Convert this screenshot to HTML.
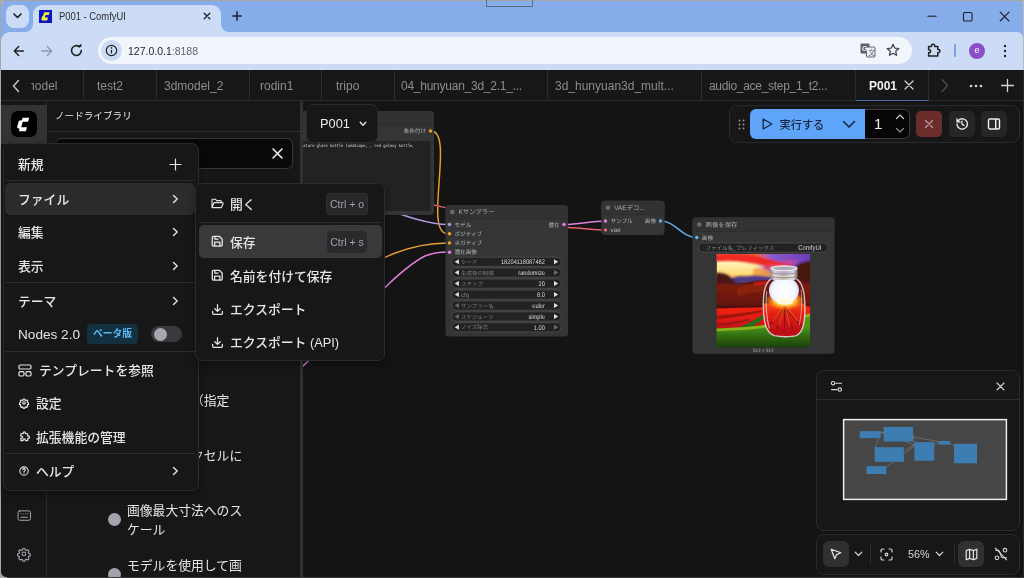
<!DOCTYPE html>
<html lang="ja">
<head>
<meta charset="utf-8">
<title>P001 - ComfyUI</title>
<style>
*{box-sizing:border-box;margin:0;padding:0}
html,body{width:1024px;height:578px;overflow:hidden;background:#141415}
body{position:relative;font-family:"Liberation Sans","Noto Sans CJK JP",sans-serif;color:#e4e4e6;font-size:13px;line-height:1}
.abs{position:absolute}
svg{position:absolute;overflow:visible}
/* ---------- browser chrome ---------- */
#titlebar{left:0;top:0;width:1024px;height:34px;background:#86acea}
#btab{left:33px;top:5px;width:188px;height:29px;background:#cddcf6;border-radius:9px 9px 0 0}
#toolbar{left:0;top:32px;width:1024px;height:38px;background:#cddcf6}
#omni{left:98px;top:37px;width:814px;height:27px;border-radius:14px;background:#f1f5fc}
.ctext{color:#1f2023;font-size:12px;white-space:nowrap}
/* ---------- app ---------- */
#app{left:0;top:70px;width:1024px;height:508px;background:#141415}
#tabs{left:1px;top:70px;width:1023px;height:31px;background:#171718;border-bottom:1px solid #2c2c2e}
.wtab{top:70px;height:30px;border-right:1px solid #2c2c2e;color:#8d8d92;font-size:12px;line-height:32px;white-space:nowrap;overflow:hidden}
#side{left:1px;top:101px;width:46px;height:477px;background:#171718;border-right:1px solid #2a2a2c}
#lib{left:47px;top:101px;width:253px;height:477px;background:#171718}
#split{left:300px;top:101px;width:3px;height:477px;background:#313134}
.menu{background:#171718;border:1px solid #2b2b2e;border-radius:7px;box-shadow:0 4px 10px rgba(0,0,0,.35)}
.mi{left:18px;margin-top:1px;font-weight:500;font-size:12.8px;color:#e6e6e8;white-space:nowrap;line-height:20px;height:20px}
.sep{height:1px;background:#2c2c2f}
.hl{background:#2c2c2e;border-radius:5px}
.kbd{background:#27272a;border:1px solid #323235;border-radius:4px;color:#a0a0a6;font-size:10.5px;line-height:20px;height:22px;text-align:center}
.libt{font-size:12.8px;line-height:22px;color:#e6e6e8;white-space:nowrap}
.dot{width:13px;height:13px;border-radius:50%;background:#a4a3ab}
</style>
</head>
<body>
<div id="root" style="position:absolute;left:0;top:0;width:1024px;height:578px;will-change:transform">
<!-- browser chrome -->
<div class="abs" style="left:0;top:0;width:1024px;height:70px;background:#b9babd"></div>
<div id="titlebar" class="abs" style="left:1px;border-radius:7px 5px 0 0;width:1022px;height:70px"></div>
<div id="toolbar" class="abs" style="left:1px;width:1021.500px;border-radius:9px 6px 0 0"></div>
<div class="abs" style="left:6px;top:5px;width:23px;height:23px;border-radius:8px;background:#cddcf6"></div>
<svg style="left:12px;top:12px" width="11" height="8" viewBox="0 0 11 8"><path d="M2 2 L5.5 5.5 L9 2" fill="none" stroke="#1f2023" stroke-width="1.7" stroke-linecap="round" stroke-linejoin="round"/></svg>
<div id="btab" class="abs"></div>
<svg style="left:25px;top:24px" width="8" height="8" viewBox="0 0 8 8"><path d="M8 0 V8 H0 A8 8 0 0 0 8 0Z" fill="#cddcf6"/></svg>
<svg style="left:221px;top:24px" width="8" height="8" viewBox="0 0 8 8"><path d="M0 0 V8 H8 A8 8 0 0 1 0 0Z" fill="#cddcf6"/></svg>
<div class="abs" style="left:39px;top:10px;width:13px;height:13px;background:#0b14c9"></div>
<svg style="left:39px;top:10px" width="13" height="13" viewBox="0 0 13 13"><path d="M5.2 2.2 H10.6 L9.8 5 H6.6 L5.9 7.6 H9 L8.2 10.6 H3.3 L2.3 9.4 L3.1 6.4 L4.1 5.6 Z" fill="#f1ee2b"/></svg>
<div class="abs ctext" style="left:59px;top:10px;font-size:10px;line-height:14px;color:#2b2d31;transform:scaleX(.94);transform-origin:0 0">P001 - ComfyUI</div>
<svg style="left:203px;top:12px" width="8" height="8" viewBox="0 0 8 8"><path d="M1.2 1.2 L6.800 6.800 M6.800 1.200 L1.200 6.800" stroke="#1f2023" stroke-width="1.300" stroke-linecap="round"/></svg>
<svg style="left:231.500px;top:11px" width="10" height="10" viewBox="0 0 10 10"><path d="M5 0.800 V9.200 M0.800 5 H9.200" stroke="#1f2023" stroke-width="1.500" stroke-linecap="round"/></svg>
<div class="abs" style="left:0;top:0;width:1024px;height:1px;background:#a3a5a8"></div>
<div class="abs" style="left:486px;top:0;width:47px;height:7px;border:1px solid #5d6c86;border-top:0"></div>
<!-- window controls -->
<svg style="left:926px;top:10px" width="12" height="12" viewBox="0 0 12 12"><path d="M1.5 6.2 H10.5" stroke="#1f2023" stroke-width="1.1"/></svg>
<svg style="left:962px;top:11px" width="12" height="12" viewBox="0 0 12 12"><rect x="1.5" y="1.5" width="8.5" height="8.5" rx="1.3" fill="none" stroke="#1f2023" stroke-width="1.1"/></svg>
<svg style="left:999px;top:11px" width="12" height="12" viewBox="0 0 12 12"><path d="M1.2 1.2 L10 10 M10 1.2 L1.2 10" stroke="#1f2023" stroke-width="1.1" stroke-linecap="round"/></svg>
<!-- toolbar icons -->
<svg style="left:12px;top:44px" width="14" height="14" viewBox="0 0 14 14"><path d="M11.3 7 H2.5 M6.6 2.600 L2.300 7 L6.600 11.400" fill="none" stroke="#1f2023" stroke-width="1.500" stroke-linecap="round" stroke-linejoin="round"/></svg>
<svg style="left:40px;top:44px" width="14" height="14" viewBox="0 0 14 14"><path d="M2 7 H11.5 M7.2 2.4 L11.7 7 L7.2 11.6" fill="none" stroke="#8a94a6" stroke-width="1.3" stroke-linecap="round" stroke-linejoin="round"/></svg>
<svg style="left:69px;top:43px" width="15" height="15" viewBox="0 0 15 15"><path d="M12.3 7.6 A4.9 4.9 0 1 1 10.6 3.8" fill="none" stroke="#1f2023" stroke-width="1.6" stroke-linecap="round"/><path d="M8.6 3.9 H12.4 V0.6 Z" fill="#1f2023"/></svg>
<div id="omni" class="abs"></div>
<div class="abs" style="left:101px;top:40px;width:21px;height:21px;border-radius:50%;background:#cddcf6"></div>
<svg style="left:105px;top:44px" width="13" height="13" viewBox="0 0 13 13"><circle cx="6.5" cy="6.5" r="5.2" fill="none" stroke="#1f2023" stroke-width="1.2"/><path d="M6.5 5.8 V9.4" stroke="#1f2023" stroke-width="1.3"/><circle cx="6.5" cy="3.9" r="0.8" fill="#1f2023"/></svg>
<div class="abs ctext" style="left:128px;top:43.500px;line-height:15px;font-size:11.200px;transform:scaleX(.937);transform-origin:0 0"><span style="color:#1f2023">127.0.0.1</span><span style="color:#5f6368">:8188</span></div>
<!-- toolbar right -->
<svg style="left:860px;top:43px" width="16" height="15" viewBox="0 0 16 15"><rect x="0.5" y="0.5" width="9" height="10" rx="1" fill="#5f6368"/><rect x="6.5" y="4" width="8.5" height="10" rx="1" fill="#eef3fb" stroke="#5f6368" stroke-width="1"/><text x="2" y="8" font-size="7" font-weight="bold" fill="#eef3fb" font-family="Liberation Sans, sans-serif">G</text><text x="8.3" y="12.3" font-size="7" fill="#5f6368" font-family="Noto Sans CJK JP, sans-serif">文</text></svg>
<svg style="left:886px;top:43px" width="14" height="14" viewBox="0 0 14 14"><path d="M7 1.3 L8.7 5.1 L12.8 5.5 L9.7 8.2 L10.6 12.3 L7 10.2 L3.4 12.3 L4.3 8.2 L1.2 5.5 L5.3 5.1 Z" fill="none" stroke="#3c4043" stroke-width="1.2" stroke-linejoin="round"/></svg>
<svg style="left:926px;top:42px" width="16" height="16" viewBox="0 0 16 16"><path d="M2.600 4.600 H5.400 V3.900 A1.700 1.700 0 0 1 8.800 3.900 V4.600 H11.800 V7.500 H12.300 A1.600 1.600 0 0 1 12.300 10.700 H11.800 V14 H2.600 V10.700 H3.100 A1.500 1.500 0 0 0 3.100 7.700 H2.600 Z" fill="none" stroke="#1f2023" stroke-width="1.500" stroke-linejoin="round"/></svg>
<div class="abs" style="left:954px;top:44px;width:2px;height:13px;background:#7ba4e6;border-radius:1px"></div>
<div class="abs" style="left:969px;top:43px;width:16px;height:16px;border-radius:50%;background:#8a4fc7;color:#fff;font-size:9px;line-height:15px;text-align:center">e</div>
<svg style="left:1003px;top:44px" width="4" height="14" viewBox="0 0 4 14"><circle cx="2" cy="2" r="1.2" fill="#1f2023"/><circle cx="2" cy="7" r="1.2" fill="#1f2023"/><circle cx="2" cy="12" r="1.2" fill="#1f2023"/></svg>
<!-- app -->
<div id="app" class="abs"></div>
<!-- CANVAS START -->
<svg id="cv" style="left:0;top:0;text-rendering:geometricPrecision" width="1024" height="578" viewBox="0 0 1024 578" font-family="Liberation Sans, Noto Sans CJK JP, sans-serif">
<defs><clipPath id="cvclip"><rect x="303" y="101" width="721" height="477"/></clipPath></defs>
<g clip-path="url(#cvclip)">
<path d="M431 131 C455 131 423 233.75 447.5 233.75" fill="none" stroke="#1a1a1a" stroke-width="2.45" stroke-opacity=".4"/>
<path d="M431 131 C455 131 423 233.75 447.5 233.75" fill="none" stroke="#e9a033" stroke-width="1.45" stroke-linecap="round"/>
<path d="M250 310 C330 310 367 243 448 243" fill="none" stroke="#1a1a1a" stroke-width="2.45" stroke-opacity=".4"/>
<path d="M250 310 C330 310 367 243 448 243" fill="none" stroke="#e9a033" stroke-width="1.45" stroke-linecap="round"/>
<path d="M285 383 C320 350 360 312 385 287.5 C400 273 413 262 425 256 C434 252.5 440 252 448 252" fill="none" stroke="#1a1a1a" stroke-width="2.45" stroke-opacity=".4"/>
<path d="M285 383 C320 350 360 312 385 287.5 C400 273 413 262 425 256 C434 252.5 440 252 448 252" fill="none" stroke="#e27fdc" stroke-width="1.45" stroke-linecap="round"/>
<path d="M380 207 C395 212 425 224.5 448 224.5" fill="none" stroke="#1a1a1a" stroke-width="2.45" stroke-opacity=".4"/>
<path d="M380 207 C395 212 425 224.5 448 224.5" fill="none" stroke="#b19adb" stroke-width="1.45" stroke-linecap="round"/>
<path d="M405 199 C450 208 520 226 568 227.5 C585 228.3 595 230 605.5 230" fill="none" stroke="#1a1a1a" stroke-width="2.45" stroke-opacity=".4"/>
<path d="M405 199 C450 208 520 226 568 227.5 C585 228.3 595 230 605.5 230" fill="none" stroke="#e6626a" stroke-width="1.45" stroke-linecap="round"/>
<path d="M564 224.5 C580 224.5 590 221 605.5 221" fill="none" stroke="#1a1a1a" stroke-width="2.45" stroke-opacity=".4"/>
<path d="M564 224.5 C580 224.5 590 221 605.5 221" fill="none" stroke="#e27fdc" stroke-width="1.45" stroke-linecap="round"/>
<path d="M660.5 221 C676 221 681 237.5 697 237.5" fill="none" stroke="#1a1a1a" stroke-width="2.45" stroke-opacity=".4"/>
<path d="M660.5 221 C676 221 681 237.5 697 237.5" fill="none" stroke="#5fb0ee" stroke-width="1.45" stroke-linecap="round"/>
<rect x="290" y="111" width="144" height="104" rx="3.5" fill="#353535"/>
<path d="M290 125 V114.5 a3.5 3.5 0 0 1 3.5 -3.5 H430.5 a3.5 3.5 0 0 1 3.5 3.5 V125 Z" fill="#323232"/>
<rect x="290" y="124.6" width="144" height="0.8" fill="#2a2a2a" opacity=".7"/>
<circle cx="296.7" cy="118.0" r="2.3" fill="#6a6a6a"/>
<circle cx="430.5" cy="131" r="1.75" fill="#e9a033"/>
<text transform="translate(426.0 133) scale(.25 0.25)" font-size="22.4" fill="#b4b4b4" text-anchor="end">条件付け</text>
<rect x="296" y="141" width="134.5" height="70" rx="1.5" fill="#222222"/>
<text x="303.3" y="147.2" font-size="4.4" fill="#dcdcdc" text-anchor="start" font-family="Liberation Mono, monospace" textLength="111" lengthAdjust="spacingAndGlyphs">ature glass bottle landscape, , red galaxy bottle,</text>
<rect x="445.5" y="205" width="122.5" height="131.5" rx="3.5" fill="#353535"/>
<path d="M445.5 219 V208.5 a3.5 3.5 0 0 1 3.5 -3.5 H564.5 a3.5 3.5 0 0 1 3.5 3.5 V219 Z" fill="#323232"/>
<rect x="445.5" y="218.6" width="122.5" height="0.8" fill="#2a2a2a" opacity=".7"/>
<circle cx="452.2" cy="212.0" r="2.3" fill="#6a6a6a"/>
<text transform="translate(458.5 214.3) scale(.25 0.25)" font-size="25.6" fill="#a8a8a8" text-anchor="start">Kサンプラー</text>
<circle cx="449.5" cy="224.5" r="1.75" fill="#b19adb"/>
<text transform="translate(454.5 226.5) scale(.25 0.25)" font-size="22.4" fill="#b4b4b4" text-anchor="start">モデル</text>
<circle cx="449.5" cy="233.75" r="1.75" fill="#e9a033"/>
<text transform="translate(454.5 235.75) scale(.25 0.25)" font-size="22.4" fill="#b4b4b4" text-anchor="start">ポジティブ</text>
<circle cx="449.5" cy="243" r="1.75" fill="#e9a033"/>
<text transform="translate(454.5 245) scale(.25 0.25)" font-size="22.4" fill="#b4b4b4" text-anchor="start">ネガティブ</text>
<circle cx="449.5" cy="252.2" r="1.75" fill="#e27fdc"/>
<text transform="translate(454.5 254.2) scale(.25 0.25)" font-size="22.4" fill="#b4b4b4" text-anchor="start">潜在画像</text>
<circle cx="564" cy="224.5" r="1.75" fill="#e27fdc"/>
<text transform="translate(559.5 226.5) scale(.25 0.25)" font-size="22.4" fill="#b4b4b4" text-anchor="end">潜在</text>
<rect x="451.7" y="257.2" width="109.5" height="9.2" rx="4.6" fill="#222222" stroke="#565656" stroke-width="0.7"/>
<path d="M454.7 261.8 l4.2 -2.5 v5 Z" fill="#e0e0e0"/>
<path d="M558.2 261.8 l-4.2 -2.5 v5 Z" fill="#e0e0e0"/>
<text transform="translate(461.0 263.8) scale(.25 0.25)" font-size="22" fill="#7e7e7e" text-anchor="start">シード</text>
<text transform="translate(544.9000000000001 264.0) scale(.25 0.295)" font-size="22.8" fill="#dcdcdc" text-anchor="end">18204118087482</text>
<rect x="451.7" y="268.0" width="109.5" height="9.2" rx="4.6" fill="#222222" stroke="#565656" stroke-width="0.7"/>
<path d="M454.7 272.6 l4.2 -2.5 v5 Z" fill="#e0e0e0"/>
<path d="M558.2 272.6 l-4.2 -2.5 v5 Z" fill="#6a6a6a"/>
<text transform="translate(461.0 274.6) scale(.25 0.25)" font-size="22" fill="#7e7e7e" text-anchor="start">生成後の制御</text>
<text transform="translate(544.9000000000001 274.8) scale(.25 0.295)" font-size="22.8" fill="#dcdcdc" text-anchor="end">randomize</text>
<rect x="451.7" y="279.0" width="109.5" height="9.2" rx="4.6" fill="#222222" stroke="#565656" stroke-width="0.7"/>
<path d="M454.7 283.6 l4.2 -2.5 v5 Z" fill="#e0e0e0"/>
<path d="M558.2 283.6 l-4.2 -2.5 v5 Z" fill="#e0e0e0"/>
<text transform="translate(461.0 285.6) scale(.25 0.25)" font-size="22" fill="#7e7e7e" text-anchor="start">ステップ</text>
<text transform="translate(544.9000000000001 285.8) scale(.25 0.295)" font-size="22.8" fill="#dcdcdc" text-anchor="end">20</text>
<rect x="451.7" y="290.0" width="109.5" height="9.2" rx="4.6" fill="#222222" stroke="#565656" stroke-width="0.7"/>
<path d="M454.7 294.6 l4.2 -2.5 v5 Z" fill="#e0e0e0"/>
<path d="M558.2 294.6 l-4.2 -2.5 v5 Z" fill="#e0e0e0"/>
<text transform="translate(461.0 296.6) scale(.25 0.25)" font-size="22" fill="#7e7e7e" text-anchor="start"><tspan font-size="24.8">cfg</tspan></text>
<text transform="translate(544.9000000000001 296.8) scale(.25 0.295)" font-size="22.8" fill="#dcdcdc" text-anchor="end">8.0</text>
<rect x="451.7" y="301.0" width="109.5" height="9.2" rx="4.6" fill="#222222" stroke="#565656" stroke-width="0.7"/>
<path d="M454.7 305.6 l4.2 -2.5 v5 Z" fill="#6a6a6a"/>
<path d="M558.2 305.6 l-4.2 -2.5 v5 Z" fill="#e0e0e0"/>
<text transform="translate(461.0 307.6) scale(.25 0.25)" font-size="22" fill="#7e7e7e" text-anchor="start">サンプラー名</text>
<text transform="translate(544.9000000000001 307.8) scale(.25 0.295)" font-size="22.8" fill="#dcdcdc" text-anchor="end">euler</text>
<rect x="451.7" y="311.9" width="109.5" height="9.2" rx="4.6" fill="#222222" stroke="#565656" stroke-width="0.7"/>
<path d="M454.7 316.5 l4.2 -2.5 v5 Z" fill="#6a6a6a"/>
<path d="M558.2 316.5 l-4.2 -2.5 v5 Z" fill="#e0e0e0"/>
<text transform="translate(461.0 318.5) scale(.25 0.25)" font-size="22" fill="#7e7e7e" text-anchor="start">スケジューラ</text>
<text transform="translate(544.9000000000001 318.7) scale(.25 0.295)" font-size="22.8" fill="#dcdcdc" text-anchor="end">simple</text>
<rect x="451.7" y="322.7" width="109.5" height="9.2" rx="4.6" fill="#222222" stroke="#565656" stroke-width="0.7"/>
<path d="M454.7 327.3 l4.2 -2.5 v5 Z" fill="#e0e0e0"/>
<path d="M558.2 327.3 l-4.2 -2.5 v5 Z" fill="#6a6a6a"/>
<text transform="translate(461.0 329.3) scale(.25 0.25)" font-size="22" fill="#7e7e7e" text-anchor="start">ノイズ除去</text>
<text transform="translate(544.9000000000001 329.5) scale(.25 0.295)" font-size="22.8" fill="#dcdcdc" text-anchor="end">1.00</text>
<rect x="601.3" y="200.8" width="63.2" height="34.2" rx="3.5" fill="#353535"/>
<path d="M601.3 214.60000000000002 V204.3 a3.5 3.5 0 0 1 3.5 -3.5 H661.0 a3.5 3.5 0 0 1 3.5 3.5 V214.60000000000002 Z" fill="#323232"/>
<rect x="601.3" y="214.20000000000002" width="63.2" height="0.8" fill="#2a2a2a" opacity=".7"/>
<circle cx="608.0" cy="207.70000000000002" r="2.3" fill="#6a6a6a"/>
<text transform="translate(614.3 210.00000000000003) scale(.25 0.25)" font-size="25.6" fill="#a8a8a8" text-anchor="start">VAEデコ...</text>
<circle cx="605.5" cy="221" r="1.75" fill="#e27fdc"/>
<text transform="translate(610.5 223) scale(.25 0.25)" font-size="22.4" fill="#b4b4b4" text-anchor="start">サンプル</text>
<circle cx="605.5" cy="230" r="1.75" fill="#e6626a"/>
<text transform="translate(610.5 232) scale(.25 0.25)" font-size="22.4" fill="#b4b4b4" text-anchor="start"><tspan font-size="25.2">vae</tspan></text>
<circle cx="660.5" cy="221" r="1.75" fill="#5fb0ee"/>
<text transform="translate(656.0 223) scale(.25 0.25)" font-size="22.4" fill="#b4b4b4" text-anchor="end">画像</text>
<rect x="692.5" y="217.5" width="142" height="136.3" rx="3.5" fill="#353535"/>
<path d="M692.5 231.5 V221.0 a3.5 3.5 0 0 1 3.5 -3.5 H831.0 a3.5 3.5 0 0 1 3.5 3.5 V231.5 Z" fill="#323232"/>
<rect x="692.5" y="231.1" width="142" height="0.8" fill="#2a2a2a" opacity=".7"/>
<circle cx="699.2" cy="224.5" r="2.3" fill="#6a6a6a"/>
<text transform="translate(705.5 226.8) scale(.25 0.25)" font-size="25.6" fill="#a8a8a8" text-anchor="start">画像を保存</text>
<circle cx="696.8" cy="237.5" r="1.75" fill="#5fb0ee"/>
<text transform="translate(701.8 239.5) scale(.25 0.25)" font-size="22.4" fill="#b4b4b4" text-anchor="start">画像</text>
<rect x="698.5" y="243.0" width="129.5" height="9.2" rx="4.6" fill="#222222" stroke="#565656" stroke-width="0.7"/>
<text transform="translate(705.5 249.6) scale(.25 0.25)" font-size="22" fill="#8a8a8a" text-anchor="start">ファイル名_プレフィックス</text>
<text transform="translate(821.5 249.79999999999998) scale(.25 0.2875)" font-size="24" fill="#dcdcdc" text-anchor="end">ComfyUI</text>
<svg x="716.6" y="254" width="93.5" height="93.3" viewBox="0 0 100 100" preserveAspectRatio="none">
<defs>
<linearGradient id="sky" x1="0" y1="0" x2="0" y2="1"><stop offset="0" stop-color="#ef5a2c"/><stop offset=".3" stop-color="#fff3b8"/><stop offset=".7" stop-color="#ffdc78"/><stop offset="1" stop-color="#f0903c"/></linearGradient>
<linearGradient id="purp" x1="0" y1="0" x2="1" y2="0"><stop offset="0" stop-color="#a070d8" stop-opacity="0"/><stop offset=".25" stop-color="#8c5ccc"/><stop offset="1" stop-color="#6a3cb8"/></linearGradient>
<linearGradient id="forest" x1="0" y1="0" x2="0" y2="1"><stop offset="0" stop-color="#4c1424"/><stop offset=".2" stop-color="#7a1c10"/><stop offset=".7" stop-color="#6a160c"/><stop offset="1" stop-color="#350a06"/></linearGradient>
<linearGradient id="field" x1="0" y1="0" x2="0" y2="1"><stop offset="0" stop-color="#f0260e"/><stop offset=".5" stop-color="#e01a14"/><stop offset="1" stop-color="#b01212"/></linearGradient>
<linearGradient id="grass" x1="0" y1="0" x2="0" y2="1"><stop offset="0" stop-color="#5c9c1a"/><stop offset=".4" stop-color="#4c9018"/><stop offset=".6" stop-color="#357212"/><stop offset="1" stop-color="#17380a"/></linearGradient>
<radialGradient id="jsky" cx="72" cy="40" r="17" gradientUnits="userSpaceOnUse"><stop offset="0" stop-color="#ffffff"/><stop offset=".7" stop-color="#f4f7ff"/><stop offset="1" stop-color="#cfdaf4"/></radialGradient>
<radialGradient id="jsun" cx="73" cy="50" r="20" gradientUnits="userSpaceOnUse" gradientTransform="translate(73 50) scale(1.1 .55) translate(-73 -50)"><stop offset="0" stop-color="#ffffff"/><stop offset=".3" stop-color="#fff6a0"/><stop offset=".55" stop-color="#ffb428"/><stop offset=".8" stop-color="#f8681a" stop-opacity=".7"/><stop offset="1" stop-color="#ea3410" stop-opacity="0"/></radialGradient>
<linearGradient id="jred" x1="0" y1="0" x2="0" y2="1"><stop offset="0" stop-color="#f0501a"/><stop offset=".3" stop-color="#e61c16"/><stop offset="1" stop-color="#b00e16"/></linearGradient>
<linearGradient id="neck" x1="0" y1="0" x2="1" y2="0"><stop offset="0" stop-color="#8f8c96"/><stop offset=".15" stop-color="#e4e2e8"/><stop offset=".5" stop-color="#bdbac4"/><stop offset=".85" stop-color="#eceaf0"/><stop offset="1" stop-color="#8a8790"/></linearGradient>
<filter id="b1" x="-10%" y="-10%" width="120%" height="120%"><feGaussianBlur stdDeviation="1.2"/></filter>
<filter id="b2" x="-10%" y="-10%" width="120%" height="120%"><feGaussianBlur stdDeviation="0.7"/></filter>
<clipPath id="imgclip"><rect x="0" y="0" width="100" height="100"/></clipPath>
<clipPath id="jarclip"><path d="M58 27 C51 32 49.500 44 50 58 C50.500 74 53 85 62 87.500 C68 89 80 89 85 87.500 C92.500 85 94.500 72 94.500 58 C94.500 44 93 32 86 27 Z"/></clipPath>
</defs>
<g clip-path="url(#imgclip)">
<rect width="100" height="30" fill="url(#sky)"/>
<g filter="url(#b1)">
<rect x="42" y="-2" width="60" height="24" fill="url(#purp)"/>
<path d="M-3 1 C10 -1 30 -1 44 2 C58 5 66 9 82 12 L82 17 C68 17 56 14 44 11 C30 8 14 6 -3 8Z" fill="#ee2a20"/>
<path d="M52 12 C60 10 70 13 80 12 C70 16 60 18 50 16Z" fill="#e04468"/>
<path d="M70 8 C76 6.500 84 7 88 8.500 C82 10 76 10 70 9.500Z" fill="#d04890"/>
<path d="M40 15 C50 16 58 18 64 21 L64 26 L38 26Z" fill="#f39a34" opacity=".8"/>
<path d="M16 26 C24 22.500 30 24.500 36 23.500 C44 22.500 52 24 62 24.500 L62 31 L16 31Z" fill="#4a3a88"/>
<path d="M-2 20.500 C4 19.500 10 21 14 24 C18 27 21 31 24 36 L-2 38Z" fill="#4a1214"/>
<path d="M83 15 C88 9 94 7 102 7.500 L102 38 L83 38Z" fill="#47160e"/>
</g>
<g filter="url(#b2)">
<path d="M-2 31 C8 30 18 33 28 31 C40 28.500 52 27.500 62 27.500 L102 29 L102 62 L-2 62Z" fill="url(#forest)"/>
<path d="M22 36 C32 32 44 31 58 31 L58 40 C44 40 32 42 22 46Z" fill="#96280e" opacity=".55"/>
<path d="M40 30 C46 29 54 28.500 60 29 L60 34 C52 33 46 33 40 34Z" fill="#e01a14" opacity=".7"/>
<path d="M-2 58.500 C20 58 40 57.500 60 57 L102 56 L102 80 L-2 83Z" fill="url(#field)"/>
<path d="M-2 66 C14 65 30 63 50 60 L52 62 C36 65.500 16 68.500 -2 70.500Z" fill="#8a1010" opacity=".75"/>
<path d="M-2 74 C10 74 22 72 34 69 L36 71 C24 74.500 10 77 -2 78Z" fill="#8a1010" opacity=".6"/>
<path d="M22 80 C32 75 42 69.500 52 64 L57 65.500 C49 70 41 76 34 81Z" fill="#2a6a16"/>
<path d="M-2 80 C12 79.500 26 79 40 77.500 C50 76.500 56 75.500 62 74 C76 70.500 90 66 102 63.500 L102 102 L-2 102Z" fill="url(#grass)"/><path d="M-2 81.500 C12 81 26 80.500 40 79 C50 78 56 77 62 75.500 C76 72 90 67.500 102 65" fill="none" stroke="#9cc020" stroke-width="3" opacity=".75"/>
</g>
<!-- jar -->
<g clip-path="url(#jarclip)">
<g filter="url(#b2)">
<rect x="48" y="26" width="48" height="64" fill="#6a180e"/>
<path d="M48 44 C54 42 58 48 62 55 L48 58Z" fill="#3a200e"/>
<path d="M96 44 C90 43 88 48 84 55 L96 58Z" fill="#3a200e"/>
<rect x="48" y="53" width="48" height="37" fill="url(#jred)"/>
<ellipse cx="73" cy="50" rx="22" ry="11" fill="url(#jsun)"/>
<ellipse cx="72" cy="39" rx="16" ry="14.500" fill="url(#jsky)"/>
<ellipse cx="73" cy="50.500" rx="9" ry="4" fill="#fffbe0"/>
<path d="M73 57 L61.500 88 M73 57 L72.500 88 M73 57 L84 88 M73 57 L53 80 M73 57 L93 80" stroke="#6c0a10" stroke-width="1.500" opacity=".6"/>
<path d="M73 55 L66.500 76 M73 55 L78.500 76 M73 55 L60 72 M73 55 L87 72" stroke="#ff8a1c" stroke-width="1.400" opacity=".5"/>
<ellipse cx="72" cy="85" rx="20" ry="6" fill="#c01018" opacity=".7"/>
</g>
</g>
<path d="M58 27 C51 32 49.500 44 50 58 C50.500 74 53 85 62 87.500 C68 89 80 89 85 87.500 C92.500 85 94.500 72 94.500 58 C94.500 44 93 32 86 27" fill="none" stroke="#ebe9f0" stroke-width="1.500" opacity=".8"/>
<path d="M53.500 40 C52.500 52 53 68 56.500 80" fill="none" stroke="#ffffff" stroke-width="1.300" opacity=".55"/>
<path d="M90.500 38 C91.500 50 91 64 88.500 76" fill="none" stroke="#ffffff" stroke-width="1.100" opacity=".45"/>
<rect x="57.500" y="14" width="29" height="14" rx="2.500" fill="url(#neck)" opacity=".82"/>
<ellipse cx="72" cy="15.200" rx="14.600" ry="2.700" fill="#d4d2da" fill-opacity=".9" stroke="#f7f7fa" stroke-width=".8"/>
<ellipse cx="72" cy="15.500" rx="11.500" ry="1.600" fill="#a9a6b0"/>
<path d="M57.500 20 C62 22 82 22 86.500 20 M57.500 24 C62 26 82 26 86.500 24" fill="none" stroke="#7d7a84" stroke-width=".9" opacity=".8"/>
</g>
</svg>
<text transform="translate(763.3 351.6) scale(.25 0.25)" font-size="18.4" fill="#a8a8a8" text-anchor="middle">512 × 512</text>
</g>
</svg>
<!-- CANVAS END -->
<div id="tabs" class="abs"></div>
<!-- workflow tabs -->
<svg style="left:10.500px;top:77.500px" width="10" height="16" viewBox="0 0 10 16"><path d="M7.500 2.500 L2.500 8 L7.500 13.500" fill="none" stroke="#c8c8cc" stroke-width="1.400" stroke-linecap="round" stroke-linejoin="round"/></svg>
<div class="abs wtab" style="left:31px;width:53px;padding-left:0"><span style="display:inline-block;margin-left:-19.500px">3dmodel</span></div>
<div class="abs wtab" style="left:85px;width:72px;padding-left:12px">test2</div>
<div class="abs wtab" style="left:157px;width:93px;padding-left:7px">3dmodel_2</div>
<div class="abs wtab" style="left:250px;width:72px;padding-left:10px">rodin1</div>
<div class="abs wtab" style="left:322px;width:73px;padding-left:14px">tripo</div>
<div class="abs wtab" style="left:395px;width:153px;padding-left:6px;letter-spacing:-.25px">04_hunyuan_3d_2.1_...</div>
<div class="abs wtab" style="left:548px;width:154px;padding-left:7px">3d_hunyuan3d_mult...</div>
<div class="abs wtab" style="left:702px;width:154px;padding-left:7px;letter-spacing:-.3px">audio_ace_step_1_t2...</div>
<div class="abs wtab" style="left:856px;width:73px;padding-left:13px;color:#f2f2f4;font-weight:bold;height:31px;border-bottom:1.500px solid #4b6ea3">P001</div>
<svg style="left:904px;top:80px" width="10" height="10" viewBox="0 0 10 10"><path d="M1 1 L9 9 M9 1 L1 9" stroke="#d6d6da" stroke-width="1.2" stroke-linecap="round"/></svg>
<svg style="left:940px;top:78px" width="9" height="15" viewBox="0 0 9 15"><path d="M2 1.5 L7.5 7.5 L2 13.5" fill="none" stroke="#4a4a4e" stroke-width="1.4" stroke-linecap="round" stroke-linejoin="round"/></svg>
<svg style="left:969px;top:84px" width="14" height="4" viewBox="0 0 14 4"><circle cx="2" cy="2" r="1.3" fill="#d6d6da"/><circle cx="7" cy="2" r="1.3" fill="#d6d6da"/><circle cx="12" cy="2" r="1.3" fill="#d6d6da"/></svg>
<svg style="left:1001px;top:79px" width="13" height="13" viewBox="0 0 13 13"><path d="M6.5 0.5 V12.5 M0.5 6.5 H12.5" stroke="#d6d6da" stroke-width="1.3" stroke-linecap="round"/></svg>
<div id="side" class="abs"></div>
<div id="lib" class="abs"></div>
<div id="split" class="abs"></div>
<!-- sidebar + library -->
<div class="abs" style="left:1px;top:105px;width:46px;height:39px;background:#333335"></div>
<div class="abs" style="left:11px;top:111px;width:26px;height:26px;border-radius:7px;background:#000"></div>
<svg style="left:11.2px;top:111.9px" width="26" height="26" viewBox="0 0 26 26"><path d="M11.7 5.7 H18.2 L17.1 9.7 H11.7 L10.2 15.2 H16 L14.8 19.3 H7.9 L8.5 17.1 L6 15.6 L7.9 8.8 L10.7 8.2 Z" fill="#fff"/></svg>
<svg style="left:16.600px;top:509.800px" width="14.500" height="11.500" viewBox="0 0 16 13"><g fill="none" stroke="#a9a9b0" stroke-width="1.1" stroke-linecap="round"><rect x="1" y="1" width="14" height="10.6" rx="1.8"/><path d="M4 4.3 H4.2 M6.6 4.3 H6.8 M9.2 4.3 H9.4 M11.8 4.3 H12 M4.4 8.2 H11.6"/></g></svg>
<svg style="left:16.900px;top:547.400px" width="13.800" height="13.800" viewBox="0 0 24 24"><g fill="none" stroke="#a9a9b0" stroke-width="1.9" stroke-linejoin="round"><path d="M10.3 2.5 h3.4 l.6 2.7 l1.9 .9 l2.4 -1.4 l2.4 2.4 l-1.4 2.4 l.8 1.9 l2.6 .6 v3.4 l-2.6 .6 l-.8 1.9 l1.4 2.4 l-2.4 2.4 l-2.4 -1.4 l-1.9 .8 l-.6 2.7 h-3.4 l-.6 -2.7 l-1.9 -.8 l-2.4 1.4 l-2.4 -2.4 l1.4 -2.4 l-.8 -1.9 l-2.6 -.6 v-3.4 l2.6 -.6 l.8 -1.9 l-1.4 -2.4 l2.4 -2.4 l2.4 1.4 l1.9 -.9 z"/><circle cx="12" cy="12" r="3.2"/></g></svg>
<div class="abs" style="left:55px;top:108px;font-size:9.6px;line-height:16px;color:#ececee;white-space:nowrap">ノードライブラリ</div>
<div class="abs" style="left:48px;top:131px;width:252px;height:1px;background:#2e2e31"></div>
<div class="abs" style="left:55px;top:138px;width:238px;height:31px;background:#09090a;border:1px solid #37373b;border-radius:6px"></div>
<svg style="left:272px;top:148px" width="11" height="11" viewBox="0 0 11 11"><path d="M1 1 L10 10 M10 1 L1 10" stroke="#f4f4f6" stroke-width="1.5" stroke-linecap="round"/></svg>
<div class="abs libt" style="left:127px;top:390px;line-height:22px">画像を拡大（指定</div>
<div class="abs libt" style="left:127px;top:445px;line-height:22px">画像を総ピクセルに</div>
<div class="abs dot" style="left:107.5px;top:513px"></div>
<div class="abs libt" style="left:127px;top:500px">画像最大寸法へのス</div>
<div class="abs libt" style="left:127px;top:518.500px">ケール</div>
<div class="abs dot" style="left:107.5px;top:567.5px"></div>
<div class="abs libt" style="left:127px;top:555px">モデルを使用して画</div>

<!-- breadcrumb -->
<div class="abs" style="left:306px;top:104px;width:72px;height:39px;background:#171718;border:1px solid #2a2a2d;border-radius:7px"></div>
<div class="abs" style="left:320px;top:113.500px;font-size:12.8px;line-height:20px;color:#ececee">P001</div>
<svg style="left:359.300px;top:120.500px" width="8" height="6" viewBox="0 0 8 6"><path d="M1.2 1.3 L4 4.2 L6.8 1.3" fill="none" stroke="#ececee" stroke-width="1.3" stroke-linecap="round" stroke-linejoin="round"/></svg>
<!-- minimap -->
<div class="abs" style="left:816px;top:370px;width:204px;height:161px;background:#171718;border:1px solid #2a2a2d;border-radius:8px"></div>
<div class="abs" style="left:817px;top:399px;width:202px;height:1px;background:#2c2c2f"></div>
<svg style="left:830px;top:380px" width="13" height="13" viewBox="0 0 13 13"><g fill="none" stroke="#d6d6da" stroke-width="1.1" stroke-linecap="round"><circle cx="3" cy="3.2" r="1.7"/><path d="M5.6 3.2 H11.5"/><circle cx="9.8" cy="9.6" r="1.7"/><path d="M1.5 9.6 H7.3"/></g></svg>
<svg style="left:996px;top:382px" width="9" height="9" viewBox="0 0 9 9"><path d="M1 1 L8 8 M8 1 L1 8" stroke="#d6d6da" stroke-width="1.1" stroke-linecap="round"/></svg>
<svg style="left:0;top:0" width="1024" height="578" viewBox="0 0 1024 578"><rect x="843.600" y="419.600" width="162.800" height="79.800" fill="#464646" stroke="#ededed" stroke-width="1.500"/></svg>
<svg style="left:0;top:0" width="1024" height="578" viewBox="0 0 1024 578"><g stroke="#9a9a9a" stroke-width=".5" fill="none" opacity=".8"><path d="M880.6 432 L914.5 445 M880.6 432 L875 448 M880.6 432 L939 441.5 M913 434 L914.5 446 M904 451 L914.5 444.5 M886 467 L914.5 446 M934 445 L939 442.5 M950 442.5 L954 447"/></g><g fill="#3e7db1"><rect x="859.7" y="431.2" width="21" height="7"/><rect x="883.6" y="427" width="29.4" height="14.5"/><rect x="874.7" y="447.2" width="29.2" height="14.6"/><rect x="866.5" y="466.2" width="19.8" height="7.8"/><rect x="914.4" y="442.1" width="19.9" height="18.6"/><rect x="939.1" y="441" width="10.8" height="3.7"/><rect x="953.9" y="443.8" width="23.1" height="19.5"/></g></svg>
<!-- bottom toolbar -->
<div class="abs" style="left:816px;top:534px;width:204px;height:41px;background:#171718;border:1px solid #2a2a2d;border-radius:8px"></div>
<div class="abs" style="left:823px;top:541px;width:26px;height:26px;background:#303033;border-radius:6px"></div>
<svg style="left:829px;top:547px" width="14" height="14" viewBox="0 0 14 14"><path d="M2.2 2.2 L11.8 5.8 L7.6 7.6 L5.8 11.8 Z" fill="none" stroke="#e6e6e8" stroke-width="1.2" stroke-linejoin="round"/></svg>
<svg style="left:854px;top:551px" width="9" height="6" viewBox="0 0 9 6"><path d="M1.2 1.2 L4.5 4.5 L7.8 1.2" fill="none" stroke="#d6d6da" stroke-width="1.2" stroke-linecap="round" stroke-linejoin="round"/></svg>
<div class="abs" style="left:870px;top:544px;width:1px;height:21px;background:#2e2e31"></div>
<svg style="left:880px;top:548px" width="13" height="13" viewBox="0 0 13 13"><g fill="none" stroke="#d6d6da" stroke-width="1.2" stroke-linecap="round" stroke-linejoin="round"><path d="M1 4 V2.6 A1.6 1.6 0 0 1 2.6 1 H4 M9 1 H10.4 A1.6 1.6 0 0 1 12 2.6 V4 M12 9 V10.4 A1.6 1.6 0 0 1 10.4 12 H9 M4 12 H2.6 A1.6 1.6 0 0 1 1 10.4 V9"/><circle cx="6.5" cy="6.5" r="1.3"/></g></svg>
<div class="abs" style="left:908px;top:546px;font-size:10.800px;line-height:16px;color:#d6d6da;white-space:nowrap">56%</div>
<svg style="left:935px;top:551px" width="9" height="6" viewBox="0 0 9 6"><path d="M1.2 1.2 L4.5 4.5 L7.8 1.2" fill="none" stroke="#d6d6da" stroke-width="1.2" stroke-linecap="round" stroke-linejoin="round"/></svg>
<div class="abs" style="left:954px;top:544px;width:1px;height:21px;background:#2e2e31"></div>
<div class="abs" style="left:958px;top:541px;width:26px;height:26px;background:#303033;border-radius:6px"></div>
<svg style="left:965px;top:548px" width="13" height="13" viewBox="0 0 13 13"><path d="M1.2 2.6 L4.6 1.2 L8.4 2.6 L11.8 1.2 V10.4 L8.4 11.8 L4.6 10.4 L1.2 11.8 Z M4.6 1.2 V10.4 M8.4 2.6 V11.8" fill="none" stroke="#e6e6e8" stroke-width="1.2" stroke-linejoin="round"/></svg>
<svg style="left:994px;top:547px" width="14" height="14" viewBox="0 0 14 14"><g fill="none" stroke="#d6d6da" stroke-width="1.1" stroke-linecap="round"><circle cx="3" cy="10.8" r="1.8"/><circle cx="11" cy="3.2" r="1.8"/><path d="M1.5 3.2 H4.2 C6.5 3.2 6.2 10.8 8.6 10.8 H12.5"/><path d="M1.5 1.2 L12.5 12.8"/></g></svg>
<!-- action bar -->
<div class="abs" style="left:729px;top:104.500px;width:291px;height:38.500px;background:#171718;border:1px solid #2a2a2d;border-radius:8px"></div>
<svg style="left:738px;top:119px" width="7" height="11" viewBox="0 0 7 11"><g fill="#8c8c92"><circle cx="1.5" cy="1.5" r="1"/><circle cx="5.5" cy="1.5" r="1"/><circle cx="1.5" cy="5.5" r="1"/><circle cx="5.5" cy="5.5" r="1"/><circle cx="1.5" cy="9.5" r="1"/><circle cx="5.5" cy="9.5" r="1"/></g></svg>
<div class="abs" style="left:750px;top:109px;width:115px;height:30px;background:#5ea4f8;border-radius:6px 0 0 6px"></div>
<svg style="left:760.500px;top:117px" width="13" height="14" viewBox="0 0 13 14"><path d="M2.200 2 L10.800 7 L2.200 12 Z" fill="none" stroke="#16253d" stroke-width="1.300" stroke-linejoin="round"/></svg>
<div class="abs" style="left:779.500px;top:115.500px;font-size:11.200px;font-weight:500;line-height:18px;color:#16253d;white-space:nowrap">実行する</div>
<svg style="left:842px;top:120px" width="14" height="9" viewBox="0 0 14 9"><path d="M1.5 1.5 L7 7 L12.5 1.5" fill="none" stroke="#14233a" stroke-width="1.5" stroke-linecap="round" stroke-linejoin="round"/></svg>
<div class="abs" style="left:865px;top:109px;width:45px;height:30px;background:#060607;border:1px solid #3a3a3e;border-left:0;border-radius:0 6px 6px 0"></div>
<div class="abs" style="left:874px;top:114px;font-size:15px;line-height:20px;color:#f0f0f2">1</div>
<svg style="left:895px;top:113px" width="10" height="7" viewBox="0 0 10 7"><path d="M1.5 5.5 L5 2 L8.5 5.5" fill="none" stroke="#c8c8cc" stroke-width="1.2" stroke-linecap="round" stroke-linejoin="round"/></svg>
<svg style="left:895px;top:127px" width="10" height="7" viewBox="0 0 10 7"><path d="M1.5 1.5 L5 5 L8.5 1.5" fill="none" stroke="#8c8c92" stroke-width="1.2" stroke-linecap="round" stroke-linejoin="round"/></svg>
<div class="abs" style="left:916px;top:110.500px;width:26px;height:26px;background:#6b2c2c;border-radius:5px"></div>
<svg style="left:924px;top:119px" width="10" height="10" viewBox="0 0 10 10"><path d="M1.5 1.5 L8.5 8.5 M8.5 1.5 L1.5 8.5" stroke="#bf9c9c" stroke-width="1.200" stroke-linecap="round"/></svg>
<div class="abs" style="left:949px;top:110.500px;width:26px;height:26px;background:#262628;border-radius:5px"></div>
<svg style="left:955px;top:117px" width="14" height="14" viewBox="0 0 14 14"><path d="M2 7 A5.2 5.2 0 1 0 3.6 3.2 L2 4.8 M2 1.8 V4.9 H5.1 M7 4.2 V7.2 L9 8.4" fill="none" stroke="#f0f0f2" stroke-width="1.3" stroke-linecap="round" stroke-linejoin="round"/></svg>
<div class="abs" style="left:981px;top:110.500px;width:26px;height:26px;background:#262628;border-radius:5px"></div>
<svg style="left:987px;top:117px" width="14" height="14" viewBox="0 0 14 14"><rect x="1.5" y="2" width="11" height="10" rx="1.5" fill="none" stroke="#f0f0f2" stroke-width="1.4"/><path d="M8.7 2 V12" stroke="#f0f0f2" stroke-width="1.4"/></svg>
<!-- window edges -->
<div class="abs" style="left:0;top:0;width:1px;height:578px;background:#a6a6a8"></div>
<svg style="left:0;top:570px" width="8" height="8" viewBox="0 0 8 8"><path d="M0 0 H1 V1.500 A5.500 5.500 0 0 0 6.500 7 H8 V8 H0 Z" fill="#a6a6a8"/></svg>
<div class="abs" style="left:7px;top:577px;width:1017px;height:1px;background:#3a3a3c"></div>
<div class="abs" style="left:1023px;top:70px;width:1px;height:508px;background:#29292b"></div>
<!-- main menu -->
<div class="abs menu" style="left:3px;top:143px;width:196px;height:348px"></div>
<div class="abs hl" style="left:5px;top:183px;width:190px;height:32px"></div>
<div class="abs mi" style="top:154px">新規</div>
<svg style="left:169px;top:158px" width="13" height="13" viewBox="0 0 13 13"><path d="M6.5 1 V12 M1 6.5 H12" stroke="#e6e6e8" stroke-width="1.2" stroke-linecap="round"/></svg>
<div class="abs sep" style="left:5px;top:180px;width:190px"></div>
<div class="abs mi" style="top:189px">ファイル</div><svg style="left:172px;top:194px" width="7" height="10" viewBox="0 0 7 10"><path d="M1.5 1.5 L5.2 5 L1.5 8.5" fill="none" stroke="#e6e6e8" stroke-width="1.4" stroke-linecap="round" stroke-linejoin="round"/></svg>
<div class="abs mi" style="top:222px">編集</div><svg style="left:172px;top:227px" width="7" height="10" viewBox="0 0 7 10"><path d="M1.5 1.5 L5.2 5 L1.5 8.5" fill="none" stroke="#e6e6e8" stroke-width="1.4" stroke-linecap="round" stroke-linejoin="round"/></svg>
<div class="abs mi" style="top:256px">表示</div><svg style="left:172px;top:260.5px" width="7" height="10" viewBox="0 0 7 10"><path d="M1.5 1.5 L5.2 5 L1.5 8.5" fill="none" stroke="#e6e6e8" stroke-width="1.4" stroke-linecap="round" stroke-linejoin="round"/></svg>
<div class="abs sep" style="left:5px;top:282px;width:190px"></div>
<div class="abs mi" style="top:291px">テーマ</div><svg style="left:172px;top:296px" width="7" height="10" viewBox="0 0 7 10"><path d="M1.5 1.5 L5.2 5 L1.5 8.5" fill="none" stroke="#e6e6e8" stroke-width="1.4" stroke-linecap="round" stroke-linejoin="round"/></svg>
<div class="abs mi" style="top:324px;font-size:13.6px">Nodes 2.0</div>
<div class="abs" style="left:87px;top:324px;width:51px;height:20px;background:#12303f;border-radius:4px;color:#5bb6f2;font-size:9.800px;font-weight:bold;line-height:19px;text-align:center;white-space:nowrap">ベータ版</div>
<div class="abs" style="left:151px;top:326px;width:31px;height:16px;border-radius:8px;background:#3a3a3e"></div>
<div class="abs" style="left:154px;top:327.500px;width:13px;height:13px;border-radius:50%;background:#a9a8b0"></div>
<div class="abs sep" style="left:5px;top:351px;width:190px"></div>
<svg style="left:18px;top:364px" width="14" height="13" viewBox="0 0 14 13"><g fill="none" stroke="#e6e6e8" stroke-width="1.2" stroke-linejoin="round"><rect x="1" y="1" width="12" height="4" rx="1.2"/><rect x="1" y="7.6" width="5" height="4.4" rx="1.2"/><rect x="8" y="7.6" width="5" height="4.4" rx="1.2"/></g></svg>
<div class="abs mi" style="left:39px;top:360px">テンプレートを参照</div>
<svg style="left:19px;top:398px" width="10" height="10" viewBox="0 0 24 24"><g fill="none" stroke="#e6e6e8" stroke-width="2.8" stroke-linejoin="round"><path d="M10.3 2.5 h3.4 l.6 2.7 l1.9 .9 l2.4 -1.4 l2.4 2.4 l-1.4 2.4 l.8 1.9 l2.6 .6 v3.4 l-2.6 .6 l-.8 1.9 l1.4 2.4 l-2.4 2.4 l-2.4 -1.4 l-1.9 .8 l-.6 2.7 h-3.4 l-.6 -2.7 l-1.9 -.8 l-2.4 1.4 l-2.4 -2.4 l1.4 -2.4 l-.8 -1.9 l-2.6 -.6 v-3.4 l2.6 -.6 l.8 -1.9 l-1.4 -2.4 l2.4 -2.4 l2.4 1.4 l1.9 -.9 z"/><circle cx="12" cy="12" r="3"/></g></svg>
<div class="abs mi" style="left:36px;top:393px">設定</div>
<svg style="left:18.500px;top:431px" width="11" height="11" viewBox="0 0 24 24"><path d="M9 4.5 a2.5 2.5 0 0 1 5 0 V6 H19 V11 H20.5 a2.5 2.5 0 0 1 0 5 H19 V21 H14 V19.5 a2.5 2.5 0 0 0 -5 0 V21 H4 V16 H5.5 a2.5 2.5 0 0 0 0 -5 H4 V6 H9 Z" fill="none" stroke="#e6e6e8" stroke-width="2.6" stroke-linejoin="round"/></svg>
<div class="abs mi" style="left:36px;top:427px">拡張機能の管理</div>
<div class="abs sep" style="left:5px;top:453px;width:190px"></div>
<svg style="left:19px;top:466px" width="10" height="10" viewBox="0 0 24 24"><g fill="none" stroke="#e6e6e8" stroke-width="2.6" stroke-linecap="round"><circle cx="12" cy="12" r="10"/><path d="M9 9.2 a3 3 0 1 1 4.4 2.7 c-1 .6 -1.4 1.2 -1.4 2.3"/><path d="M12 17.6 v.2"/></g></svg>
<div class="abs mi" style="left:36px;top:461px">ヘルプ</div><svg style="left:172px;top:466px" width="7" height="10" viewBox="0 0 7 10"><path d="M1.5 1.5 L5.2 5 L1.5 8.5" fill="none" stroke="#e6e6e8" stroke-width="1.4" stroke-linecap="round" stroke-linejoin="round"/></svg>
<!-- submenu -->
<div class="abs menu" style="left:195px;top:183px;width:190px;height:178px"></div>
<div class="abs hl" style="left:199px;top:225px;width:183px;height:33px;background:#39393b"></div>
<svg style="left:211px;top:198px" width="13" height="11" viewBox="0 0 13 11"><path d="M1 9.6 V2.2 A1 1 0 0 1 2 1.2 H4.4 L5.6 2.6 H9.4 A1 1 0 0 1 10.4 3.6 V4.6 M1 9.6 L2.8 5.2 A1 1 0 0 1 3.7 4.6 H11.4 A.8 .8 0 0 1 12.1 5.7 L10.6 9 A1 1 0 0 1 9.7 9.6 Z" fill="none" stroke="#e6e6e8" stroke-width="1.15" stroke-linejoin="round"/></svg>
<div class="abs mi" style="left:230px;top:194px">開く</div>
<div class="abs kbd" style="left:326px;top:193px;width:42px">Ctrl + o</div>
<div class="abs sep" style="left:199px;top:222px;width:183px"></div>
<svg style="left:211.300px;top:235.300px" width="12.500" height="12.500" viewBox="0 0 24 24"><g fill="none" stroke="#e6e6e8" stroke-width="2.5" stroke-linejoin="round"><path d="M5 2.5 H16 L21.5 8 V19 A2.5 2.5 0 0 1 19 21.5 H5 A2.5 2.5 0 0 1 2.500 19 V5 A2.500 2.500 0 0 1 5 2.500 Z"/><path d="M7 21 V13.500 H17 V21 M7.500 3 V8 H14.500"/></g></svg>
<div class="abs mi" style="left:230px;top:231.500px">保存</div>
<div class="abs kbd" style="left:327px;top:230.500px;width:40px;background:#2a2a2d;border-color:#2a2a2d">Ctrl + s</div>
<svg style="left:211.300px;top:269.300px" width="12.500" height="12.500" viewBox="0 0 24 24"><g fill="none" stroke="#e6e6e8" stroke-width="2.5" stroke-linejoin="round"><path d="M5 2.5 H16 L21.5 8 V19 A2.5 2.5 0 0 1 19 21.5 H5 A2.5 2.5 0 0 1 2.500 19 V5 A2.500 2.500 0 0 1 5 2.500 Z"/><path d="M7 21 V13.500 H17 V21 M7.500 3 V8 H14.500"/></g></svg>
<div class="abs mi" style="left:230px;top:266px">名前を付けて保存</div>
<svg style="left:210.800px;top:302.500px" width="13" height="13" viewBox="0 0 24 24"><path d="M12 3 V15 M7 10.500 L12 15.500 L17 10.500 M3 15.500 V19 A2 2 0 0 0 5 21 H19 A2 2 0 0 0 21 19 V15.500" fill="none" stroke="#e6e6e8" stroke-width="2.300" stroke-linecap="round" stroke-linejoin="round"/></svg>
<div class="abs mi" style="left:230px;top:299px">エクスポート</div>
<svg style="left:210.800px;top:335.500px" width="13" height="13" viewBox="0 0 24 24"><path d="M12 3 V15 M7 10.500 L12 15.500 L17 10.500 M3 15.500 V19 A2 2 0 0 0 5 21 H19 A2 2 0 0 0 21 19 V15.500" fill="none" stroke="#e6e6e8" stroke-width="2.300" stroke-linecap="round" stroke-linejoin="round"/></svg>
<div class="abs mi" style="left:230px;top:332px">エクスポート (API)</div>
</div>
</body>
</html>
